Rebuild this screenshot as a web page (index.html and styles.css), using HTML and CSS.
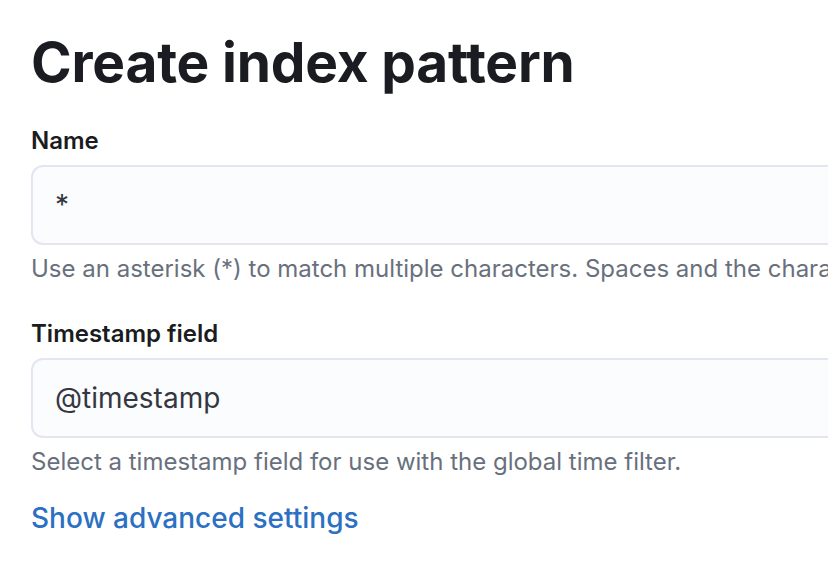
FILE: index.html
```html
<!DOCTYPE html>
<html lang="en">
<head>
<meta charset="utf-8">
<link rel="stylesheet" href="styles.css">
</head>
<body>
<main class="page">
  <h1 class="title">Create index pattern</h1>
  <div class="field">
    <label class="label">Name</label>
    <div class="input">*</div>
    <div class="help">Use an asterisk (*) to match multiple characters. Spaces and the characters \, /, ?, ", &lt;, &gt;, | are not allowed.</div>
  </div>
  <div class="field field-last">
    <label class="label">Timestamp field</label>
    <div class="input">@timestamp</div>
    <div class="help">Select a timestamp field for use with the global time filter.</div>
  </div>
  <a class="link" href="#">Show advanced settings</a>
</main>
</body>
</html>
```

FILE: styles.css
```css
html, body {
  margin: 0;
  padding: 0;
  background: #ffffff;
  overflow: hidden;
}
body {
  font-family: Inter, "Noto Sans", sans-serif;
  color: #1a1c21;
}
.page {
  width: 797px;
  padding: 26px 0 0 31px;
  display: flex;
  flex-direction: column;
}
.title {
  margin: 0 0 27px 0;
  font-size: 55px;
  font-weight: 700;
  line-height: 72px;
  letter-spacing: -0.2px;
  color: #1a1c21;
  white-space: nowrap;
}
.field {
  display: flex;
  flex-direction: column;
  margin-bottom: 33px;
}
.field-last {
  margin-bottom: 20px;
}
.label {
  font-size: 24px;
  font-weight: 600;
  line-height: 32px;
  color: #1a1c21;
  margin-bottom: 8px;
}
.input {
  height: 80px;
  box-sizing: border-box;
  border: 2px solid #e4e5f0;
  border-right: none;
  border-radius: 12px 0 0 12px;
  margin-right: -20px;
  background: #fbfcfd;
  padding: 0 22px;
  display: flex;
  align-items: center;
  font-size: 28px;
  color: #343741;
}
.help {
  margin-top: 8px;
  font-size: 24px;
  line-height: 32px;
  color: #69707d;
  white-space: nowrap;
  overflow: hidden;
}
.link {
  font-size: 28px;
  line-height: 40px;
  color: #2b70c2;
  text-decoration: none;
  font-weight: 500;
  align-self: flex-start;
}
```
